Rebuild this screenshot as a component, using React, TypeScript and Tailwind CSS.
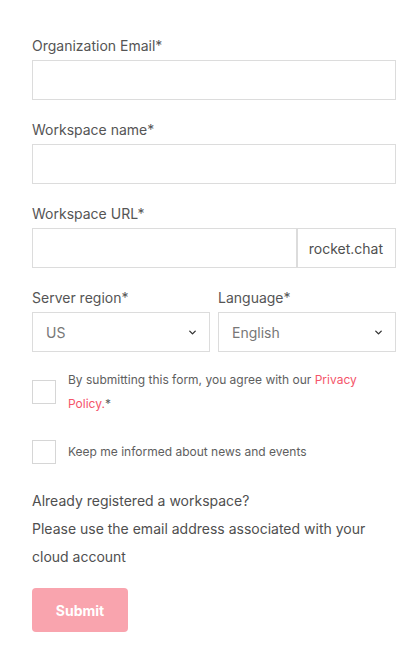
import { ChevronDown } from 'lucide-react';

const font = { fontFamily: 'Inter, "Noto Sans", sans-serif' };

function Field({ label, children }: { label: string; children: React.ReactNode }) {
  return (
    <div className="flex flex-col gap-1">
      <label className="text-[14px] leading-5 text-[#555]">{label}</label>
      {children}
    </div>
  );
}

function Select({ value }: { value: string }) {
  return (
    <div className="flex h-10 items-center justify-between border border-[#dcdcdc] bg-white pl-[13px] pr-[11px]">
      <span className="text-[14px] text-[#777]">{value}</span>
      <ChevronDown size={11} strokeWidth={3} className="text-[#333]" />
    </div>
  );
}

function Checkbox() {
  return <div className="h-6 w-6 shrink-0 border border-[#d6d6d6] bg-white" />;
}

export default function App() {
  return (
    <div className="min-h-screen bg-white pl-8 pr-[22px] pt-9 pb-8" style={font}>
      <div className="flex flex-col gap-5">
        <Field label="Organization Email*">
          <div className="h-10 border border-[#dcdcdc] bg-white" />
        </Field>
        <Field label="Workspace name*">
          <div className="h-10 border border-[#dcdcdc] bg-white" />
        </Field>
        <Field label="Workspace URL*">
          <div className="flex h-10">
            <div className="flex-1 border border-[#dcdcdc] bg-white" />
            <div className="flex w-[99px] items-center justify-end border border-[#dcdcdc] pr-[12px] text-[14px] text-[#4f4f4f]">
              rocket.chat
            </div>
          </div>
        </Field>
        <div className="grid grid-cols-2 gap-2">
          <Field label="Server region*">
            <Select value="US" />
          </Field>
          <Field label="Language*">
            <Select value="English" />
          </Field>
        </div>
      </div>

      <div className="mt-4 flex items-center gap-3">
        <Checkbox />
        <p className="w-[310px] text-[12px] leading-6 text-[#5e5e5e]">
          By submitting this form, you agree with our{' '}
          <span className="text-[#f5556a]">Privacy Policy.</span>*
        </p>
      </div>

      <div className="mt-6 flex items-center gap-3">
        <Checkbox />
        <p className="text-[12px] leading-6 text-[#5e5e5e]">Keep me informed about news and events</p>
      </div>

      <div className="mt-[23px] text-[14px] leading-7 text-[#4f4f4f]">
        <p>Already registered a workspace?</p>
        <p>Please use the email address associated with your cloud account</p>
      </div>

      <button className="mt-[17px] h-11 w-24 rounded bg-[#f9a4ae] text-[14px] font-bold text-white">
        Submit
      </button>
    </div>
  );
}
